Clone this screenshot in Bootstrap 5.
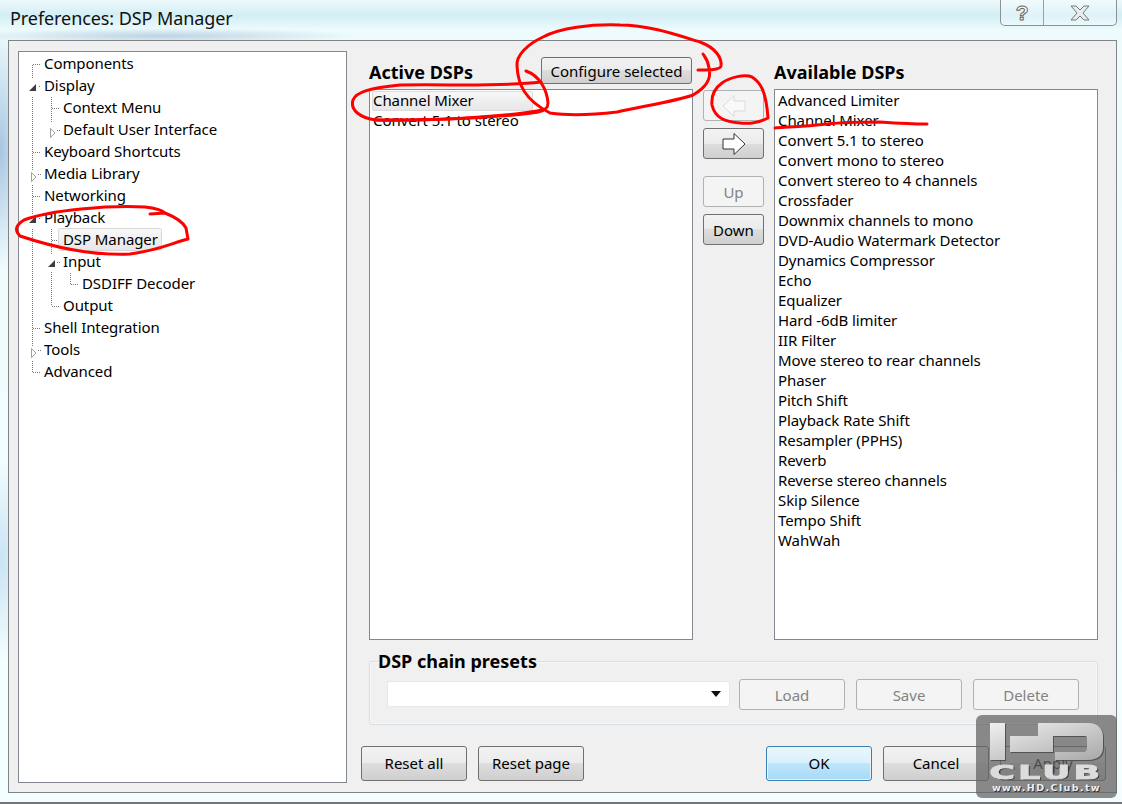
<!DOCTYPE html>
<html lang="en">
<head>
<meta charset="utf-8">
<title>Preferences: DSP Manager</title>
<link rel="stylesheet" href="https://cdn.jsdelivr.net/npm/bootstrap@5.3.0/dist/css/bootstrap.min.css">
<style>
html,body{height:804px;overflow:hidden}
body{margin:0;font-family:"Noto Sans","DejaVu Sans",sans-serif;font-size:15px;letter-spacing:-.08px;color:#000;background:#f1fdfd}
.aero{position:relative;width:1122px;height:804px;border-bottom:2px solid #6e7479;
 background:
  radial-gradient(ellipse 30px 120px at 0 150px,rgba(120,160,205,.6),transparent),
  radial-gradient(ellipse 30px 100px at 2px 560px,rgba(170,205,235,.55),transparent),
  radial-gradient(ellipse 200px 8px at 160px 36px,rgba(120,150,190,.4),transparent),
  linear-gradient(180deg,#eef9fb 0,#d2eef5 15px,#edfbfc 30px,#f4fefe 100%)}
.ttl{height:40px;padding:6px 0 0 10px;font-size:18px;line-height:24px;color:#111}
.capbtns{position:absolute;top:0;left:1000px;width:117px;height:26px;border:1px solid #8b9196;border-top:0;border-radius:0 0 5px 5px;display:flex;background:rgba(255,255,255,.25)}
.capq{width:43px;height:25px;border-right:1px solid #9aa0a4;text-align:center;font-family:"Liberation Sans",sans-serif;font-size:21px;font-weight:700;line-height:25px;color:#fff;-webkit-text-stroke:1px #666}
.capx{flex:1;display:flex;align-items:center;justify-content:center}
.dlg{margin-left:8px;width:1109px;height:753px;border:1px solid #7f8488;background:#f0f0f0;padding:10px 9px 9px 9px;display:flex}
.pane{background:#fff;border:1px solid #828790}
.tree{position:relative;width:329px;height:732px;flex:none;padding-top:1px}
.lines{position:absolute;left:-1px;top:-1px}
.trow{height:22px;line-height:20px;white-space:nowrap}
.l0{padding-left:25px}.l1{padding-left:44px}.l2{padding-left:63px}
.trow span{display:inline-block;line-height:20px}
.trow .pick{position:relative;background:linear-gradient(180deg,#f8f8f8,#e7e7e7);box-shadow:0 0 0 1px #d9d9d9;border-radius:2px;padding:0 3px 0 4px;margin-left:-4px;line-height:21px}
.rcol{margin-left:14px;width:747px;flex:none;display:flex;flex-direction:column}
.dsp{display:grid;grid-template-columns:324px 61px 324px;grid-template-rows:38px 551px;column-gap:10px;padding-left:8px}
.hd{font-size:18px;font-weight:700;line-height:22px;white-space:nowrap;letter-spacing:0}
.hdrow{display:flex;justify-content:space-between;align-items:flex-end;padding-bottom:6px}
.hdrow2{display:flex;align-items:flex-end;padding-bottom:6px}
.lst{border-radius:0;padding:1px 3px 1px 2px;display:block}
.lst .list-group-item{border:0;background:transparent;padding:0 0 0 1px;height:20px;line-height:18px;color:#000;font-size:15px;white-space:nowrap;border-radius:0}
.lst .list-group-item.picked{background:linear-gradient(180deg,#f8f8f8,#e6e6e6);box-shadow:inset 0 0 0 1px #dcdcdc;border-radius:2px;width:161px}
.wbtn{--bs-btn-padding-y:0;--bs-btn-padding-x:0;--bs-btn-font-size:15px;--bs-btn-line-height:1;padding-top:1px;border:1px solid #707070;border-radius:3px;color:#000;
 background:linear-gradient(180deg,#f2f2f2 0,#ebebeb 50%,#dddddd 50%,#cfcfcf 100%);display:inline-flex;align-items:center;justify-content:center;flex:none;white-space:nowrap}
.wbtn:disabled{opacity:1;border-color:#adb2b5;background:#f4f4f4;color:#838383}
.btn-cfg{width:151px;height:27px;margin:0 1px -1px 0}
.mid{display:flex;flex-direction:column;padding-top:1px;margin-top:0}
.ma{width:61px;height:31px}
.mico{padding-top:0}
.m1{margin-top:7px}.m2{margin-top:17px}.m3{margin-top:7px}
.prs{margin:10px 0 0 8px;width:729px;height:75px;border:1px solid #d5dfe5;border-radius:3px;padding:0 0 0 8px;min-width:0;box-shadow:inset 0 0 0 1px #f8f8f8}
.prs legend{float:none;width:auto;margin:0;padding:0;font-size:18px;font-weight:700;line-height:22px;letter-spacing:0;background:#f0f0f0}
.prsrow{display:flex;align-items:center;padding:7px 0 0 9px}
.cmb{width:343px;height:26px;background:#fff;border:1px solid #e3e9ef;border-radius:2px;flex:none;display:flex;align-items:center;justify-content:flex-end;padding-right:8px;margin:0 9px 2px 0}
.caret{width:0;height:0;border-left:5px solid transparent;border-right:5px solid transparent;border-top:6px solid #111}
.b106{width:106px;height:31px}
.gp{margin-left:11px}
.foot{display:flex;margin-top:21px;padding-right:2px}
.fbtn{width:106px;height:35px;padding-top:0}
.okb{border-color:#3c7fb1;background:linear-gradient(180deg,#eaf6fd 0,#d9f0fc 50%,#bee6fd 50%,#a7d9f5 100%);box-shadow:inset 0 0 0 1px #e8f4fa}
.ink{position:absolute;left:0;top:0;pointer-events:none}
.wm{position:absolute;left:976px;top:715px;width:141px;height:83px;background:rgba(100,100,100,.74);border-radius:6px;overflow:hidden}
.wm svg{position:absolute;left:0;top:0;filter:drop-shadow(1px 1px 0 rgba(60,60,60,.7))}
.wclub{position:absolute;left:0;top:45px;width:141px;text-align:center;font-family:"DejaVu Sans",sans-serif;font-weight:700;font-size:20px;line-height:24px;letter-spacing:2px;color:#dcdcdc;-webkit-text-stroke:1px #dcdcdc;text-shadow:1px 1px 0 #333;transform:scaleX(1.72)}
.wurl{position:absolute;left:0;top:67px;width:141px;text-align:center;font-family:"DejaVu Sans",sans-serif;font-weight:700;font-size:9.5px;line-height:12px;letter-spacing:1.4px;color:#eee;text-shadow:1px 1px 0 #333}
</style>
</head>
<body>
<div class="aero">
  <div class="ttl">Preferences: DSP Manager</div>
  <div class="capbtns">
    <div class="capq">?</div>
    <div class="capx"><svg width="20" height="16" viewBox="0 0 20 16"><path d="M1 1h5l4 4 4-4h5l-6 7 6 7h-5l-4-4-4 4H1l6-7z" fill="#e8ecee" stroke="#70767a"/></svg></div>
  </div>
  <div class="dlg">
    <div class="pane tree">
      <svg class="lines" width="329" height="732" viewBox="18 51 329 732">
        <g fill="none" stroke="#777" stroke-dasharray="1 1" shape-rendering="crispEdges">
          <path d="M32.5 65V78M32.5 97V170M32.5 185V214M32.5 229V346M32.5 361V373"/>
          <path d="M33 64.500H41M39 86.500H41M33 152.500H41M38 174.500H41M33 196.500H41M39 218.500H41M33 328.500H41M38 350.500H41M33 372.500H41"/>
          <path d="M51.500 97V122M51.500 229V254M51.500 272V306"/>
          <path d="M52 108.500H60M57 130.500H60M52 240.500H59M57 262.500H60M52 306.500H60"/>
          <path d="M70.500 273V284M71 284.500H79"/>
        </g>
        <g fill="#3c3c3c">
          <path d="M36 84V91H29zM36 216V223H29zM55 260V267H48z"/>
        </g>
        <g fill="#fff" stroke="#a0a0a0">
          <path d="M50.500 128.500V137.500L55 133zM31.500 172.500V181.500L36 177zM31.500 348.500V357.500L36 353z"/>
        </g>
      </svg>
      <div class="trow l0"><span>Components</span></div>
      <div class="trow l0"><span>Display</span></div>
      <div class="trow l1"><span>Context Menu</span></div>
      <div class="trow l1"><span>Default User Interface</span></div>
      <div class="trow l0"><span>Keyboard Shortcuts</span></div>
      <div class="trow l0"><span>Media Library</span></div>
      <div class="trow l0"><span>Networking</span></div>
      <div class="trow l0"><span>Playback</span></div>
      <div class="trow l1"><span class="pick">DSP Manager</span></div>
      <div class="trow l1"><span>Input</span></div>
      <div class="trow l2"><span>DSDIFF Decoder</span></div>
      <div class="trow l1"><span>Output</span></div>
      <div class="trow l0"><span>Shell Integration</span></div>
      <div class="trow l0"><span>Tools</span></div>
      <div class="trow l0"><span>Advanced</span></div>
    </div>
    <div class="rcol">
      <div class="dsp">
        <div class="hdrow"><span class="hd">Active DSPs</span><button class="btn wbtn btn-cfg" type="button">Configure selected</button></div>
        <div></div>
        <div class="hdrow2"><span class="hd">Available DSPs</span></div>
        <div class="pane lst list-group">
          <div class="list-group-item picked">Channel Mixer</div>
          <div class="list-group-item">Convert 5.1 to stereo</div>
        </div>
        <div class="mid">
          <button class="btn wbtn ma mico" type="button" disabled aria-label="Remove"><svg width="26" height="24" viewBox="0 0 26 24"><path d="M2 12 13 1.500V7H24V17H13V22.500z" fill="#f9f9f9" stroke="#dadada"/></svg></button>
          <button class="btn wbtn ma mico m1" type="button" aria-label="Add"><svg width="26" height="24" viewBox="0 0 26 24"><path d="M24 12 13 1.500V7H2V17H13V22.500z" fill="#fff" stroke="#333"/></svg></button>
          <button class="btn wbtn ma m2" type="button" disabled>Up</button>
          <button class="btn wbtn ma m3" type="button">Down</button>
        </div>
        <div class="pane lst list-group">
          <div class="list-group-item">Advanced Limiter</div>
          <div class="list-group-item">Channel Mixer</div>
          <div class="list-group-item">Convert 5.1 to stereo</div>
          <div class="list-group-item">Convert mono to stereo</div>
          <div class="list-group-item">Convert stereo to 4 channels</div>
          <div class="list-group-item">Crossfader</div>
          <div class="list-group-item">Downmix channels to mono</div>
          <div class="list-group-item">DVD-Audio Watermark Detector</div>
          <div class="list-group-item">Dynamics Compressor</div>
          <div class="list-group-item">Echo</div>
          <div class="list-group-item">Equalizer</div>
          <div class="list-group-item">Hard -6dB limiter</div>
          <div class="list-group-item">IIR Filter</div>
          <div class="list-group-item">Move stereo to rear channels</div>
          <div class="list-group-item">Phaser</div>
          <div class="list-group-item">Pitch Shift</div>
          <div class="list-group-item">Playback Rate Shift</div>
          <div class="list-group-item">Resampler (PPHS)</div>
          <div class="list-group-item">Reverb</div>
          <div class="list-group-item">Reverse stereo channels</div>
          <div class="list-group-item">Skip Silence</div>
          <div class="list-group-item">Tempo Shift</div>
          <div class="list-group-item">WahWah</div>
        </div>
      </div>
      <fieldset class="prs">
        <legend>DSP chain presets</legend>
        <div class="prsrow">
          <div class="cmb"><i class="caret"></i></div>
          <button class="btn wbtn b106" type="button" disabled>Load</button>
          <button class="btn wbtn b106 gp" type="button" disabled>Save</button>
          <button class="btn wbtn b106 gp" type="button" disabled>Delete</button>
        </div>
      </fieldset>
      <div class="foot">
        <button class="btn wbtn fbtn" type="button">Reset all</button>
        <button class="btn wbtn fbtn gp" type="button">Reset page</button>
        <button class="btn wbtn fbtn okb ms-auto" type="button">OK</button>
        <button class="btn wbtn fbtn gp" type="button">Cancel</button>
        <button class="btn wbtn fbtn gp" type="button">Apply</button>
      </div>
    </div>
  </div>
  <svg class="ink" width="1122" height="804" viewBox="0 0 1122 804">
    <g fill="none" stroke="#f00" stroke-width="3" stroke-linecap="round" stroke-linejoin="round">
      <path d="M150 214L165 213C175 217 183 222 186 228L188 239C172 243 160 250 130 254C90 256 50 246 20 236C14 230 16 225 24 220C50 210 110 205 145 207C155 208 162 210 165 213"/>
      <path d="M526 71C540 76 547 90 548 103C548 112 540 113 500 116C440 121 400 120 376 120C360 118 350 110 353 100C356 92 370 88 400 85C450 84 500 87 541 82"/>
      <path d="M698 70C710 70 720 70 721 66C722 58 716 48 700 42C680 36 650 25 620 25C590 24 560 28 543 37C528 44 516 55 517 66C518 85 525 100 550 113C570 116 600 114 617 112C650 105 680 100 693 95C705 88 712 80 709 68C708 60 705 57 703 54"/>
      <path d="M768 118C760 122 750 124 740 123C725 122 715 118 712 105C711 95 715 88 722 83C730 77 745 74 752 77C760 82 766 90 768 118Z"/>
      <path d="M775 128C790 127 810 126 827 124C845 122 865 122 880 122C895 123 910 124 927 124"/>
      <path d="M376 120C420 121 500 118 543 110"/>
    </g>
  </svg>
  <div class="wm">
    <svg width="141" height="83" viewBox="0 0 141 83">
      <defs><linearGradient id="wg" x1="0" y1="0" x2="1" y2="1"><stop offset="0" stop-color="#f0f0f0"/><stop offset="1" stop-color="#a8a8a8"/></linearGradient></defs>
      <path d="M14 8H29V45H14zM34 21H62V8H112C122 8 127 14 127 22V33C127 40 122 45 112 45H79V37H108C111 37 111 34 111 30V24C111 21 110 21 108 21H77V37H34z" fill="url(#wg)"/>
    </svg>
    <div class="wclub">CLUB</div>
    <div class="wurl">www.HD.Club.tw</div>
  </div>
</div>
<script src="https://cdn.jsdelivr.net/npm/bootstrap@5.3.0/dist/js/bootstrap.bundle.min.js"></script>
</body>
</html>
